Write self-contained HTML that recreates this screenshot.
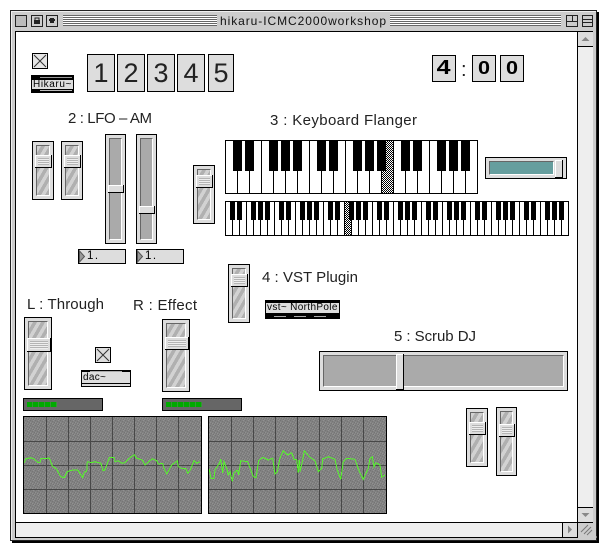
<!DOCTYPE html>
<html><head><meta charset="utf-8"><title>hikaru-ICMC2000workshop</title>
<style>
html,body{margin:0;padding:0;background:#fff;width:608px;height:552px;overflow:hidden}
body{position:relative;font-family:"Liberation Sans",sans-serif;color:#000}
.a,.sl,.sl div,.wl,.wl div,.nb,.d,.num,.obj,.m{position:absolute;box-sizing:border-box}
.sl{background:#ddd;border:1px solid #000}
.sl .t{left:3px;right:3px;top:3px;bottom:3px;border:1px solid;border-color:#666 #fff #fff #666;background:repeating-linear-gradient(120deg,#d2d2d2 0,#d2d2d2 3.5px,#b0b0b0 3.5px,#b0b0b0 7px)}
.sl .h{left:2px;background:#ddd;border-right:1px solid #000;border-bottom:1px solid #000;box-shadow:inset 1px 1px 0 #fff}
.sl .h:after{content:"";position:absolute;left:3px;right:2px;top:3px;bottom:2px;background:repeating-linear-gradient(#b4b4b4 0,#b4b4b4 1px,#eee 1px,#eee 2px)}
.wl{background:#ddd;border:1px solid #000}
.wl .t{left:3px;right:3px;top:3px;bottom:3px;border:1px solid;border-color:#666 #fff #fff #666;background:#aaa}
.wl .h{background:#ddd;border-right:1px solid #000;border-bottom:1px solid #000;box-shadow:inset 1px 1px 0 #fff}
.d{background:#ddd;border:1px solid #000;top:54px;width:28px;height:38px;font-size:27px;line-height:36px;text-align:center;color:#222}
.num{background:#ddd;border:1px solid #000;top:55px;width:24px;height:27px;font-weight:bold;line-height:25px;text-align:center}
.num span{display:inline-block}
.nb{background:#ddd;border:1px solid #000;top:249px;height:15px;width:48px;font-size:11.5px;line-height:13px;padding-left:8px;letter-spacing:1.5px}
.obj{background:#ddd;font-size:10px;white-space:nowrap}
.m{background:#666;border:1px solid #000;height:13px;top:398px}
</style></head><body>

<svg class="a" style="left:0;top:0" width="608" height="552" viewBox="0 0 608 552" xmlns="http://www.w3.org/2000/svg" font-family="Liberation Sans, sans-serif">
<defs>
<pattern id="dz" width="2" height="2" patternUnits="userSpaceOnUse"><rect width="2" height="2" fill="#fff"/><rect width="1" height="1"/><rect x="1" y="1" width="1" height="1"/></pattern>
<pattern id="nz" width="5" height="5" patternUnits="userSpaceOnUse"><rect width="5" height="5" fill="#828282"/><rect width="1" height="1" fill="#747474"/><rect x="2" y="1" width="1" height="1" fill="#767676"/><rect x="4" y="2" width="1" height="1" fill="#747474"/><rect x="1" y="3" width="1" height="1" fill="#767676"/><rect x="3" y="4" width="1" height="1" fill="#747474"/><rect x="3" y="0" width="1" height="1" fill="#929292"/><rect x="0" y="2" width="1" height="1" fill="#909090"/><rect x="2" y="3" width="1" height="1" fill="#929292"/><rect x="4" y="4" width="1" height="1" fill="#909090"/></pattern>
</defs>
<g shape-rendering="crispEdges">
<!-- window frame -->
<rect x="12" y="12" width="587" height="531" fill="#000"/>
<rect x="10" y="10" width="587" height="531" fill="#222"/>
<rect x="11" y="11" width="585" height="529" fill="#ccc"/>
<rect x="11" y="11" width="585" height="1" fill="#eee"/>
<rect x="11" y="11" width="1" height="529" fill="#eee"/>
<rect x="15" y="31" width="578" height="507" fill="#000"/>
<rect x="16" y="32" width="561" height="490" fill="#fff"/>
<!-- title stripes -->
<path d="M63 15.5H217M63 17.5H217M63 19.5H217M63 21.5H217M63 23.5H217M63 25.5H217M390 15.5H561M390 17.5H561M390 19.5H561M390 21.5H561M390 23.5H561M390 25.5H561" stroke="#666"/>
<path d="M63 16.5H217M63 18.5H217M63 20.5H217M63 22.5H217M63 24.5H217M390 16.5H561M390 18.5H561M390 20.5H561M390 22.5H561M390 24.5H561" stroke="#fff"/>
<!-- title boxes -->
<rect x="15.5" y="15.5" width="11" height="11" fill="#bbb" stroke="#222"/>
<rect x="31.5" y="15.5" width="11" height="11" fill="#ccc" stroke="#222"/>
<rect x="34" y="20" width="6" height="4" fill="#222"/><path d="M35 20v-2h4v2" fill="none" stroke="#222"/>
<rect x="46.5" y="15.5" width="11" height="11" fill="#ccc" stroke="#222"/>
<rect x="50" y="18" width="4" height="5" fill="#222"/><rect x="49" y="19" width="6" height="2" fill="#222"/>
<rect x="566.5" y="15.5" width="11" height="11" fill="#ccc" stroke="#222"/>
<path d="M572.5 16v5.500h5M567 21.500h5.500" fill="none" stroke="#222"/>
<rect x="582.5" y="15.5" width="10" height="11" fill="#ccc" stroke="#222"/>
<path d="M583 19.500h9M583 22.500h9" stroke="#222"/>
<!-- vertical scrollbar -->
<rect x="578" y="32" width="15" height="490" fill="#eee"/>
<rect x="577" y="32" width="1" height="505" fill="#000"/>
<rect x="578" y="46" width="15" height="1" fill="#000"/>
<rect x="578" y="507" width="15" height="1" fill="#000"/>
<rect x="578" y="32" width="15" height="14" fill="#ddd"/>
<rect x="578" y="508" width="15" height="14" fill="#ddd"/>
<!-- horizontal scrollbar -->
<rect x="16" y="523" width="561" height="14" fill="#eee"/>
<rect x="16" y="522" width="577" height="1" fill="#000"/>
<rect x="562" y="522" width="1" height="15" fill="#000"/>
<rect x="563" y="523" width="14" height="14" fill="#ddd"/>
<rect x="578" y="523" width="15" height="15" fill="#ccc"/>
<path d="M578 537h19" stroke="#ccc"/>
</g>
<path d="M585.500 37l-4 4h8zM585.500 517l-4-4h8zM568 525.500l4 4-4 4z" fill="#888"/>
<path d="M581 532l7-7M584 534l7-7M587 535l5-5" stroke="#777" stroke-width="1" fill="none"/>
<text x="220" y="25" font-size="12" textLength="166" lengthAdjust="spacing" fill="#111">hikaru-ICMC2000workshop</text>

<!-- keyboard 1 -->
<g shape-rendering="crispEdges">
<rect x="225.500" y="140.500" width="252" height="53" fill="#fff" stroke="#000"/>
<rect x="381" y="141" width="12" height="52" fill="url(#dz)"/>
<path d="M237.500 141V193M249.500 141V193M261.500 141V193M273.500 141V193M285.500 141V193M297.500 141V193M309.500 141V193M321.500 141V193M333.500 141V193M345.500 141V193M357.500 141V193M369.500 141V193M381.500 141V193M393.500 141V193M405.500 141V193M417.500 141V193M429.500 141V193M441.500 141V193M453.500 141V193M465.500 141V193" stroke="#000"/>
<path d="M237.500 141V171M249.500 141V171M273.500 141V171M285.500 141V171M297.500 141V171M321.500 141V171M333.500 141V171M357.500 141V171M369.500 141V171M381.500 141V171M405.500 141V171M417.500 141V171M441.500 141V171M453.500 141V171M465.500 141V171" stroke="#000" stroke-width="9"/>
<!-- keyboard 2 -->
<rect x="225.500" y="201.500" width="343" height="34" fill="#fff" stroke="#000"/>
<rect x="344" y="202" width="7" height="33" fill="url(#dz)"/>
<path d="M232.500 202V235M239.500 202V235M246.500 202V235M253.500 202V235M260.500 202V235M267.500 202V235M274.500 202V235M281.500 202V235M288.500 202V235M295.500 202V235M302.500 202V235M309.500 202V235M316.500 202V235M323.500 202V235M330.500 202V235M337.500 202V235M344.500 202V235M351.500 202V235M358.500 202V235M365.500 202V235M372.500 202V235M379.500 202V235M386.500 202V235M393.500 202V235M400.500 202V235M407.500 202V235M414.500 202V235M421.500 202V235M428.500 202V235M435.500 202V235M442.500 202V235M449.500 202V235M456.500 202V235M463.500 202V235M470.500 202V235M477.500 202V235M484.500 202V235M491.500 202V235M498.500 202V235M505.500 202V235M512.500 202V235M519.500 202V235M526.500 202V235M533.500 202V235M540.500 202V235M547.500 202V235M554.500 202V235M561.500 202V235" stroke="#000"/>
<path d="M232.500 202V220M239.500 202V220M253.500 202V220M260.500 202V220M267.500 202V220M281.500 202V220M288.500 202V220M302.500 202V220M309.500 202V220M316.500 202V220M330.500 202V220M337.500 202V220M351.500 202V220M358.500 202V220M365.500 202V220M379.500 202V220M386.500 202V220M400.500 202V220M407.500 202V220M414.500 202V220M428.500 202V220M435.500 202V220M449.500 202V220M456.500 202V220M463.500 202V220M477.500 202V220M484.500 202V220M498.500 202V220M505.500 202V220M512.500 202V220M526.500 202V220M533.500 202V220M547.500 202V220M554.500 202V220M561.500 202V220" stroke="#000" stroke-width="5"/>
<!-- scopes -->
<rect x="23.500" y="416.500" width="178" height="97" fill="url(#nz)" stroke="#000"/>
<path d="M46.500 417V513M68.500 417V513M90.500 417V513M112.500 417V513M134.500 417V513M156.500 417V513M178.500 417V513M24 441.500H201M24 465.500H201M24 489.500H201" stroke="#484848"/>
<rect x="208.500" y="416.500" width="178" height="97" fill="url(#nz)" stroke="#000"/>
<path d="M231.500 417V513M253.500 417V513M275.500 417V513M297.500 417V513M319.500 417V513M341.500 417V513M363.500 417V513M209 441.500H386M209 465.500H386M209 489.500H386" stroke="#484848"/>
<polyline fill="none" stroke="#55f52a" stroke-width="1" points="24.300,462.700 26,458.700 31,457.700 34,459 37.700,462.300 40,462.700 41,458.700 45,458.700 49.300,458 52.300,466 56.700,469.300 60.700,476.700 64.300,477.700 67.300,471.700 71,470.300 77.700,470 82.700,477.700 84.300,472.300 86.700,471 87.300,461.700 91,462.700 95,461.700 101,463.300 103,470.700 105,470 109.300,457.700 114,457.300 115,461.700 118.300,460.700 121.700,463.300 125,462.700 130,457.700 134.300,454.700 136.700,458.300 142.300,460 145,465 152.300,458.700 156.700,460.700 158.300,464 162.700,463.300 164,468.300 166.700,474 171.700,465 177.300,460.700 178.300,466.700 181.700,468.300 185.700,468.300 187.700,473.300 190,470.700 194,460.700 196.700,463.300 200,461.700"/>
<polyline fill="none" stroke="#55f52a" stroke-width="1" points="209.300,469.300 211,478.300 214,478.300 215,470 219.300,463.300 220.700,459.300 222.700,472.700 224,461.700 226.700,468.300 228.300,475 230,471.700 232.300,481.300 234,472.700 237.300,470 238.700,475 240.700,460.700 247.700,461.700 253.300,476.700 256,477.700 258.700,460.700 262.700,457.300 268.300,460 272.700,458.300 275,474 277.300,471.700 280,457.700 283.300,450.700 287.300,455 291.700,452.700 294,459.300 296.700,459.300 298.300,472.700 299.300,460 300,471.700 302.700,460 304.300,450.700 309.300,456.700 315,460.700 318.300,471.700 321.700,468.300 322.700,459 328.300,456.700 335,459.300 337.300,470 340.700,479.300 343.300,461.700 346.700,458.300 355,459.300 359.300,471.700 363.300,479.300 368.300,468.300 370,458.300 372.300,456.700 374,466.700 376,462.700 380,465 381.700,477.300 385,475"/>
</g>

<!-- labels -->
<g font-size="15" fill="#222">
<text x="68" y="123" textLength="84" lengthAdjust="spacing">2 : LFO – AM</text>
<text x="270" y="125" textLength="147" lengthAdjust="spacing">3 : Keyboard Flanger</text>
<text x="262" y="282" textLength="96" lengthAdjust="spacing">4 : VST Plugin</text>
<text x="27" y="309" textLength="77" lengthAdjust="spacing">L : Through</text>
<text x="133" y="310" textLength="64" lengthAdjust="spacing">R : Effect</text>
<text x="394" y="341" textLength="82" lengthAdjust="spacing">5 : Scrub DJ</text>
<text x="461" y="76" font-size="20">:</text>
</g>

<!-- checkboxes -->
<g shape-rendering="crispEdges"><rect x="32.500" y="53.500" width="15" height="15" fill="#e6e6e6" stroke="#000"/><rect x="95.500" y="347.500" width="15" height="15" fill="#ddd" stroke="#000"/></g>
<path d="M34 55l12 12M46 55l-12 12M97 349l12 12M109 349l-12 12" stroke="#333" fill="none"/>
</svg>

<!-- big digits -->
<div class="d" style="left:87px">1</div>
<div class="d" style="left:117px">2</div>
<div class="d" style="left:147px">3</div>
<div class="d" style="left:177px">4</div>
<div class="d" style="left:208px;width:26px">5</div>
<div class="num" style="left:432px;font-size:20px"><span style="transform:scaleX(1.25)">4</span></div>
<div class="num" style="left:472px;font-size:18px"><span style="transform:scaleX(1.2)">0</span></div>
<div class="num" style="left:500px;font-size:18px"><span style="transform:scaleX(1.2)">0</span></div>

<!-- objects -->
<div class="obj" style="left:31px;top:75px;width:43px;height:18px;border:solid #000;border-width:5px 1px 4px 1px;line-height:9px;padding-left:1px;letter-spacing:.6px">Hikaru~<div class="a" style="left:8px;right:1px;top:-3px;height:1px;background:#999"></div><div class="a" style="left:8px;right:1px;bottom:-2px;height:1px;background:#bbb"></div></div>
<div class="obj" style="left:81px;top:370px;width:50px;height:17px;border:solid #000;border-width:2px 1px 1px 1px;line-height:12px;padding-left:1px;letter-spacing:.3px">dac~<div class="a" style="left:0;right:0;bottom:2px;height:1px;background:#000"></div><div class="a" style="left:8px;right:8px;top:-1px;height:1px;background:#aaa"></div></div>
<div class="obj" style="left:265px;top:300px;width:75px;height:19px;border:solid #000;border-width:3px 1px 6px 1px;line-height:10px;padding-left:1px;letter-spacing:.35px">vst~ NorthPole<div class="a" style="left:8px;right:8px;bottom:-4px;height:1px;background:repeating-linear-gradient(90deg,#aaa 0,#aaa 12px,#000 12px,#000 20px)"></div></div>

<!-- sliders -->
<div class="sl" style="left:32px;top:141px;width:22px;height:59px"><div class="t"></div><div class="h" style="top:13px;width:17px;height:13px"></div></div>
<div class="sl" style="left:61px;top:141px;width:22px;height:59px"><div class="t"></div><div class="h" style="top:13px;width:17px;height:13px"></div></div>
<div class="sl" style="left:193px;top:165px;width:22px;height:59px"><div class="t"></div><div class="h" style="top:9px;width:17px;height:13px"></div></div>
<div class="sl" style="left:228px;top:264px;width:22px;height:59px"><div class="t"></div><div class="h" style="top:9px;width:17px;height:13px"></div></div>
<div class="sl" style="left:24px;top:317px;width:28px;height:73px"><div class="t"></div><div class="h" style="top:20px;width:24px;height:14px"></div></div>
<div class="sl" style="left:162px;top:319px;width:28px;height:73px"><div class="t"></div><div class="h" style="top:17px;width:24px;height:13px"></div></div>
<div class="sl" style="left:466px;top:408px;width:22px;height:59px"><div class="t"></div><div class="h" style="top:13px;width:17px;height:13px"></div></div>
<div class="sl" style="left:496px;top:407px;width:21px;height:69px"><div class="t"></div><div class="h" style="top:16px;width:16px;height:13px"></div></div>

<div class="wl" style="left:105px;top:134px;width:21px;height:110px"><div class="t"></div><div class="h" style="left:2px;top:50px;width:16px;height:8px"></div></div>
<div class="wl" style="left:136px;top:134px;width:21px;height:110px"><div class="t"></div><div class="h" style="left:2px;top:71px;width:16px;height:8px"></div></div>
<div class="wl" style="left:319px;top:351px;width:249px;height:40px"><div class="t"></div><div class="h" style="left:76px;top:2px;width:8px;height:36px"></div></div>
<div class="wl" style="left:485px;top:157px;width:82px;height:22px"><div class="t" style="background:#669e9e;right:12px"></div><div class="h" style="left:69px;top:2px;width:8px;height:18px"></div></div>

<!-- number boxes -->
<div class="nb" style="left:78px">1.<svg class="a" style="left:0;top:0" width="8" height="13"><path d="M0.500 1l5 5.500-5 5.500z" fill="#999" stroke="#555"/></svg></div>
<div class="nb" style="left:136px">1.<svg class="a" style="left:0;top:0" width="8" height="13"><path d="M0.500 1l5 5.500-5 5.500z" fill="#999" stroke="#555"/></svg></div>

<!-- meters -->
<div class="m" style="left:23px;width:80px"><div class="a" style="left:3px;top:3px;width:30px;height:5px;background:repeating-linear-gradient(90deg,#0a0 0,#0a0 5px,#393 5px,#393 6px)"></div></div>
<div class="m" style="left:162px;width:80px"><div class="a" style="left:3px;top:3px;width:36px;height:5px;background:repeating-linear-gradient(90deg,#0a0 0,#0a0 5px,#393 5px,#393 6px)"></div></div>
</body></html>
